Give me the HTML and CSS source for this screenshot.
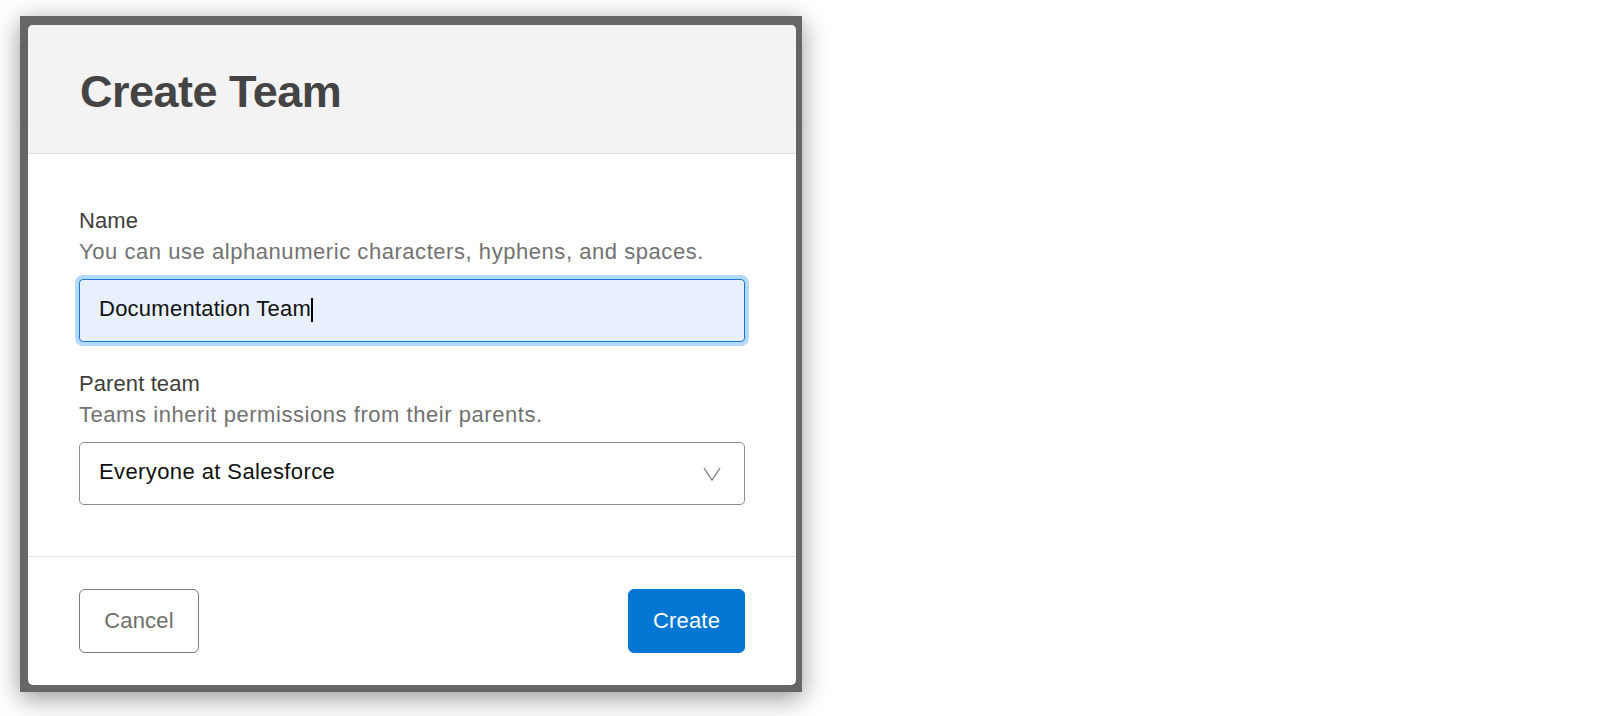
FILE: index.html
```html
<!DOCTYPE html>
<html lang="en">
<head>
<meta charset="utf-8">
<title>Create Team</title>
<link rel="stylesheet" href="styles.css">
</head>
<body>
  <div class="frame">
    <div class="panel">
      <header class="panel-header">
        <h1 class="title">Create Team</h1>
      </header>
      <div class="panel-body">
        <div class="field">
          <div class="label">Name</div>
          <div class="hint">You can use alphanumeric characters, hyphens, and spaces.</div>
          <div class="input focused"><span class="input-text">Documentation Team</span><span class="caret"></span></div>
        </div>
        <div class="field">
          <div class="label">Parent team</div>
          <div class="hint">Teams inherit permissions from their parents.</div>
          <div class="input select">
            <span class="input-text">Everyone at Salesforce</span>
            <svg class="chevron" width="18" height="14" viewBox="0 0 18 14" aria-hidden="true"><polyline points="1,1 9,13 17,1" fill="none" stroke="#6f6f6f" stroke-width="1.2" stroke-linejoin="miter"/></svg>
          </div>
        </div>
      </div>
      <footer class="panel-footer">
        <button class="btn btn-neutral" type="button">Cancel</button>
        <button class="btn btn-brand" type="button">Create</button>
      </footer>
    </div>
  </div>
</body>
</html>
```

FILE: styles.css
```css
html, body {
  margin: 0;
  padding: 0;
  background: #ffffff;
}

body {
  font-family: "Liberation Sans", Arial, Helvetica, sans-serif;
  width: 1618px;
  height: 716px;
  overflow: hidden;
}

.frame {
  margin: 16px 0 0 20px;
  width: 782px;
  box-sizing: border-box;
  padding: 9px 6px 7px 8px;
  background:
    linear-gradient(to bottom,
      #666666 0, #666666 30px,
      #5b5b5b 30px, #5b5b5b 31px,
      #666666 31px, #666666 108px,
      #5b5b5b 108px, #5b5b5b 109px,
      #666666 109px);
  box-shadow: 0 6px 24px rgba(0, 0, 0, 0.42);
}

.panel {
  width: 768px;
  background: #ffffff;
  border-radius: 5px;
  overflow: hidden;
  display: flex;
  flex-direction: column;
}

.panel-header {
  background: #f3f3f3;
  border-bottom: 1px solid #e3e3e3;
  padding: 44px 52px 39px;
}

.title {
  margin: 0;
  font-size: 45px;
  line-height: 45px;
  font-weight: 700;
  letter-spacing: -0.5px;
  color: #444444;
}

.panel-body {
  padding: 54px 51px 51px;
  display: flex;
  flex-direction: column;
  gap: 29px;
}

.field {
  display: flex;
  flex-direction: column;
}

.label {
  font-size: 22px;
  line-height: 26px;
  letter-spacing: 0.1px;
  color: #3e3e3c;
}

.hint {
  margin-top: 5px;
  font-size: 22px;
  line-height: 26px;
  letter-spacing: 0.55px;
  color: #727272;
}

.input {
  margin-top: 14px;
  height: 63px;
  box-sizing: border-box;
  border: 1px solid #8c8c8c;
  border-radius: 5px;
  padding: 0 23px 3px 19px;
  display: flex;
  align-items: center;
  font-size: 22px;
  line-height: 26px;
  color: #111111;
  background: #ffffff;
}

.input-text {
  letter-spacing: 0.25px;
}

.select .input-text {
  letter-spacing: 0.4px;
}

.input.focused {
  background: #e8effd;
  border-color: #1a74d1;
  border-radius: 4px;
  box-shadow: 0 0 0 4px #b4d9ff;
}

.caret {
  display: inline-block;
  width: 1.5px;
  height: 24px;
  background: #000000;
  align-self: center;
  margin-top: 1px;
}

.select {
  justify-content: space-between;
}

.chevron {
  display: block;
  margin-top: 3px;
}

.panel-footer {
  border-top: 1px solid #e3e3e3;
  padding: 32px 51px;
  display: flex;
  justify-content: space-between;
  align-items: center;
}

.btn {
  height: 64px;
  box-sizing: border-box;
  padding: 0;
  border-radius: 6px;
  font-family: "Liberation Sans", Arial, Helvetica, sans-serif;
  font-size: 22px;
  line-height: 26px;
  letter-spacing: 0.2px;
  cursor: pointer;
}

.btn-neutral {
  width: 120px;
  background: #ffffff;
  border: 1px solid #7b7b7b;
  color: #706e6b;
}

.btn-brand {
  width: 117px;
  background: #0176d3;
  border: 1px solid #0176d3;
  color: #ffffff;
}
```
